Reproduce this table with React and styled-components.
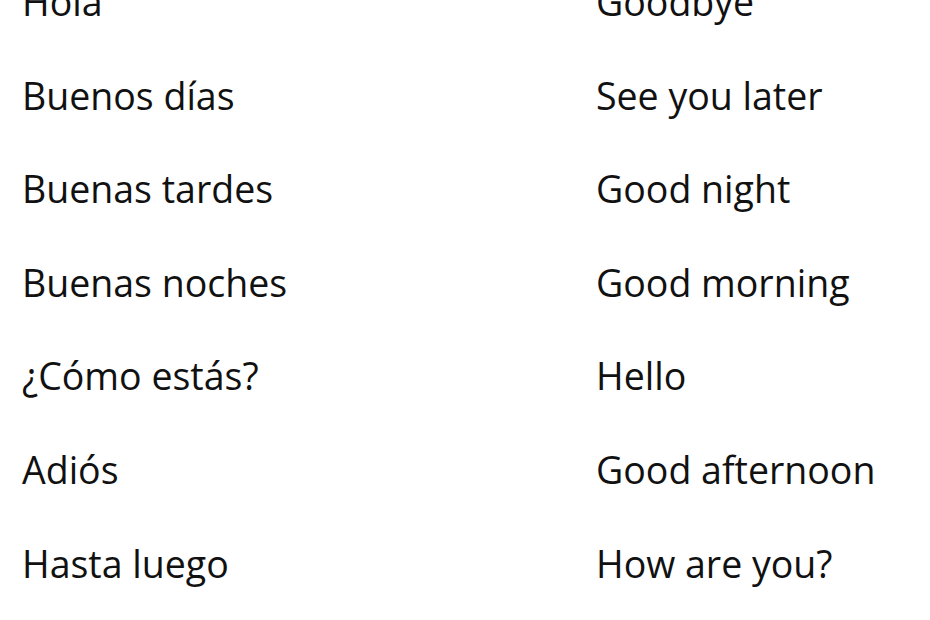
import styled, { createGlobalStyle } from "styled-components";

const GlobalStyle = createGlobalStyle`
  html, body {
    margin: 0;
    padding: 0;
    background: #ffffff;
    overflow: hidden;
  }
`;

const pairs = [
  ["Hola", "Goodbye"],
  ["Buenos días", "See you later"],
  ["Buenas tardes", "Good night"],
  ["Buenas noches", "Good morning"],
  ["¿Cómo estás?", "Hello"],
  ["Adiós", "Good afternoon"],
  ["Hasta luego", "How are you?"],
];

const App = () => {
  return (
    <>
      <GlobalStyle />
      <Board>
        <Column>
          {pairs.map(([es]) => (
            <Word key={es}>{es}</Word>
          ))}
        </Column>
        <Column>
          {pairs.map(([, en]) => (
            <Word key={en}>{en}</Word>
          ))}
        </Column>
      </Board>
    </>
  );
};
export default App;

const Board = styled.div`
  display: grid;
  grid-template-columns: 574px 1fr;
  margin-top: -44.9px;
  padding-left: 22px;
  font-family: "Open Sans", "Noto Sans", sans-serif;
  color: #111111;
`;
const Column = styled.ul`
  display: flex;
  flex-direction: column;
  list-style: none;
  margin: 0;
  padding: 0;
`;
const Word = styled.li`
  font-size: 37.5px;
  line-height: 93.6px;
  white-space: nowrap;
`;
